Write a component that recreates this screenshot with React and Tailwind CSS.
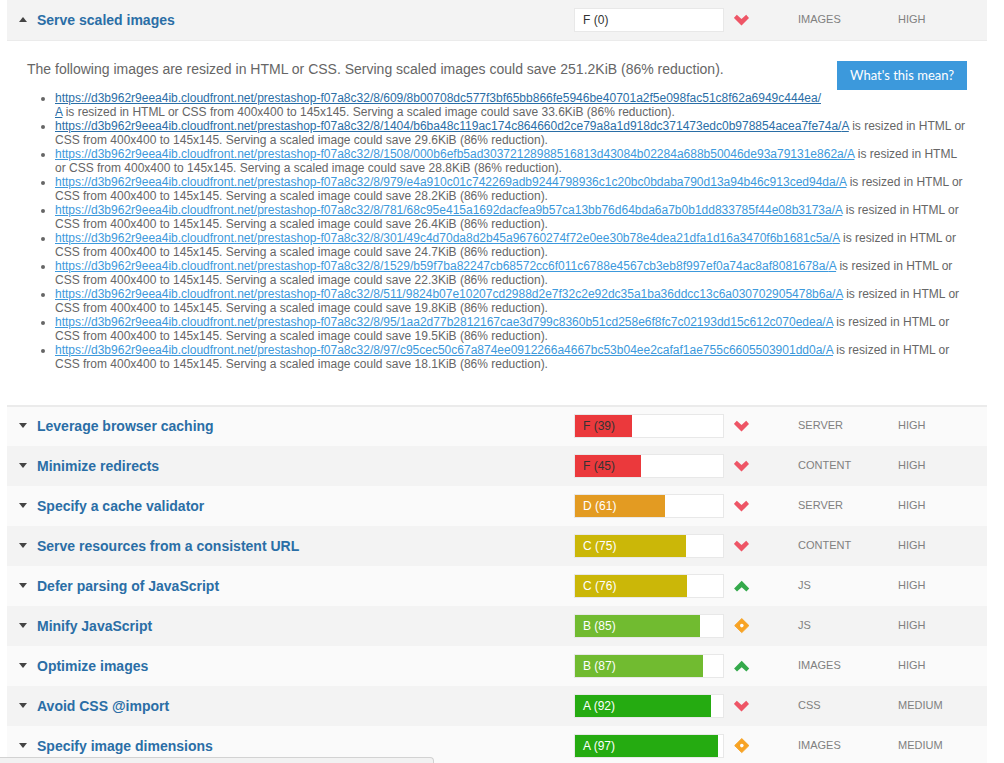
import { useState } from 'react';
import clsx from 'clsx';

const CDN = 'https://d3b962r9eea4ib.cloudfront.net/prestashop-f07a8c32/8/';

const images = [
  { path: '609/8b00708dc577f3bf65bb866fe5946be40701a2f5e098fac51c8f62a6949c444ea/', save: '33.6KiB', visited: true },
  { path: '1404/b6ba48c119ac174c864660d2ce79a8a1d918dc371473edc0b978854acea7fe74a/', save: '29.6KiB', visited: true },
  { path: '1508/000b6efb5ad30372128988516813d43084b02284a688b50046de93a79131e862a/', save: '28.8KiB' },
  { path: '979/e4a910c01c742269adb9244798936c1c20bc0bdaba790d13a94b46c913ced94da/', save: '28.2KiB' },
  { path: '781/68c95e415a1692dacfea9b57ca13bb76d64bda6a7b0b1dd833785f44e08b3173a/', save: '26.4KiB' },
  { path: '301/49c4d70da8d2b45a96760274f72e0ee30b78e4dea21dfa1d16a3470f6b1681c5a/', save: '24.7KiB' },
  { path: '1529/b59f7ba82247cb68572cc6f011c6788e4567cb3eb8f997ef0a74ac8af8081678a/', save: '22.3KiB' },
  { path: '511/9824b07e10207cd2988d2e7f32c2e92dc35a1ba36ddcc13c6a030702905478b6a/', save: '19.8KiB' },
  { path: '95/1aa2d77b2812167cae3d799c8360b51cd258e6f8fc7c02193dd15c612c070edea/', save: '19.5KiB' },
  { path: '97/c95cec50c67a874ee0912266a4667bc53b04ee2cafaf1ae755c6605503901dd0a/', save: '18.1KiB' },
];

const rules = [
  { title: 'Serve scaled images', grade: 'F', score: 0, trend: 'down', type: 'IMAGES', priority: 'HIGH', details: true },
  { title: 'Leverage browser caching', grade: 'F', score: 39, trend: 'down', type: 'SERVER', priority: 'HIGH' },
  { title: 'Minimize redirects', grade: 'F', score: 45, trend: 'down', type: 'CONTENT', priority: 'HIGH' },
  { title: 'Specify a cache validator', grade: 'D', score: 61, trend: 'down', type: 'SERVER', priority: 'HIGH' },
  { title: 'Serve resources from a consistent URL', grade: 'C', score: 75, trend: 'down', type: 'CONTENT', priority: 'HIGH' },
  { title: 'Defer parsing of JavaScript', grade: 'C', score: 76, trend: 'up', type: 'JS', priority: 'HIGH' },
  { title: 'Minify JavaScript', grade: 'B', score: 85, trend: 'same', type: 'JS', priority: 'HIGH' },
  { title: 'Optimize images', grade: 'B', score: 87, trend: 'up', type: 'IMAGES', priority: 'HIGH' },
  { title: 'Avoid CSS @import', grade: 'A', score: 92, trend: 'down', type: 'CSS', priority: 'MEDIUM' },
  { title: 'Specify image dimensions', grade: 'A', score: 97, trend: 'same', type: 'IMAGES', priority: 'MEDIUM' },
];

const gradeColors = {
  A: 'bg-[#25ab11]',
  B: 'bg-[#71bb30]',
  C: 'bg-[#cbb708]',
  D: 'bg-[#e39b22]',
  F: 'bg-[#eb393c]',
};

function Caret({ open }) {
  return (
    <svg className="h-[6px] w-2 shrink-0 fill-[#444]" viewBox="0 0 8 6" aria-hidden="true">
      <path d={open ? 'M4 0 8 5H0z' : 'M0 0h8L4 5z'} />
    </svg>
  );
}

function Trend({ kind }) {
  if (kind === 'same') {
    return (
      <svg className="block size-4" viewBox="0 0 16 16" aria-hidden="true">
        <path
          fill="#f7a325"
          stroke="#f7a325"
          strokeLinejoin="round"
          d="M7.8 0.6 14.9 7.6 7.8 14.6 0.7 7.6z"
        />
        <circle cx="7.8" cy="7.6" r="1.8" fill="#fff" />
      </svg>
    );
  }
  return (
    <svg
      className={clsx('block size-4', kind === 'up' ? 'fill-[#34a94b]' : 'fill-[#ee5566]')}
      viewBox="0 0 16 16"
      aria-hidden="true"
    >
      <path
        d={
          kind === 'up'
            ? 'M7.7 2.7 15.2 10.4 12.4 13.6 7.7 9.2 3 13.6 0.1 10.4z'
            : 'M7.5 13.6 15 5.9 12.2 2.7 7.5 7.1 2.8 2.7 -0.1 5.9z'
        }
      />
    </svg>
  );
}

function ScoreBar({ grade, score }) {
  return (
    <div className="relative h-6 w-[150px] border border-[#e8e8e8] bg-white">
      <div className={clsx('h-full', gradeColors[grade])} style={{ width: `${Math.floor(score * 1.48)}px` }} />
      <span
        className={clsx(
          'absolute inset-0 px-2 text-xs leading-[22px]',
          grade === 'F' ? 'text-[#333]' : 'text-white'
        )}
      >
        {grade} ({score})
      </span>
    </div>
  );
}

function ImageDetails() {
  return (
    <div className="px-5 pt-5 pb-[34px] text-[#666]">
      <button
        type="button"
        className="float-right mb-[10px] ml-[15px] h-[29px] w-[130px] bg-[#3c99dc] font-['Lato',sans-serif] text-[13px] text-white"
      >
        What's this mean?
      </button>
      <p className="mb-[14px] text-sm leading-4">
        The following images are resized in HTML or CSS. Serving scaled images could save 251.2KiB (86% reduction).
      </p>
      <ul className="list-disc pl-7 text-xs leading-[14px]">
        {images.map((image) => (
          <li key={image.path}>
            <a
              href={`${CDN}${image.path}A`}
              className={clsx('underline', image.visited ? 'text-[#2a6ea6]' : 'text-[#3c99dc]')}
            >
              {CDN + image.path}
              <wbr />A
            </a>{' '}
            is resized in HTML or CSS from 400x400 to 145x145. Serving a scaled image could save {image.save} (86%
            reduction).
          </li>
        ))}
      </ul>
    </div>
  );
}

function RuleRow({ rule, open, striped, onToggle }) {
  return (
    <>
      <tr className={clsx('h-10', striped ? 'bg-[#f3f3f3]' : 'bg-[#fafafa]')}>
        <td className="pl-3">
          <button
            type="button"
            aria-expanded={open}
            onClick={onToggle}
            className="flex items-center gap-[10px] text-sm font-bold text-[#2a6ea6]"
          >
            <Caret open={open} />
            {rule.title}
          </button>
        </td>
        <td>
          <ScoreBar grade={rule.grade} score={rule.score} />
        </td>
        <td>
          <Trend kind={rule.trend} />
        </td>
        <td className="pb-[2px]">{rule.type}</td>
        <td className="pb-[2px]">{rule.priority}</td>
      </tr>
      {open && rule.details && (
        <tr className="border-t border-b-2 border-[#ebebeb] bg-white">
          <td colSpan={5}>
            <ImageDetails />
          </td>
        </tr>
      )}
    </>
  );
}

export default function App() {
  const [openRule, setOpenRule] = useState('Serve scaled images');

  return (
    <main className="bg-white pr-[17px] pl-[7px] font-['Liberation_Sans',Arial,sans-serif]">
      <table className="w-full table-fixed border-collapse text-left text-[11px] leading-4 text-[#808080]">
        <colgroup>
          <col />
          <col className="w-[160px]" />
          <col className="w-16" />
          <col className="w-[100px]" />
          <col className="w-[89px]" />
        </colgroup>
        <tbody>
          {rules.map((rule, i) => (
            <RuleRow
              key={rule.title}
              rule={rule}
              open={openRule === rule.title}
              striped={i % 2 === 0}
              onToggle={() => setOpenRule(openRule === rule.title ? null : rule.title)}
            />
          ))}
        </tbody>
      </table>

      {/* browser link status */}
      <div className="fixed bottom-0 left-0 h-[6px] w-[434px] rounded-tr border-t border-r border-[#d2d2d2] bg-[#f2f2f2]" />
    </main>
  );
}
